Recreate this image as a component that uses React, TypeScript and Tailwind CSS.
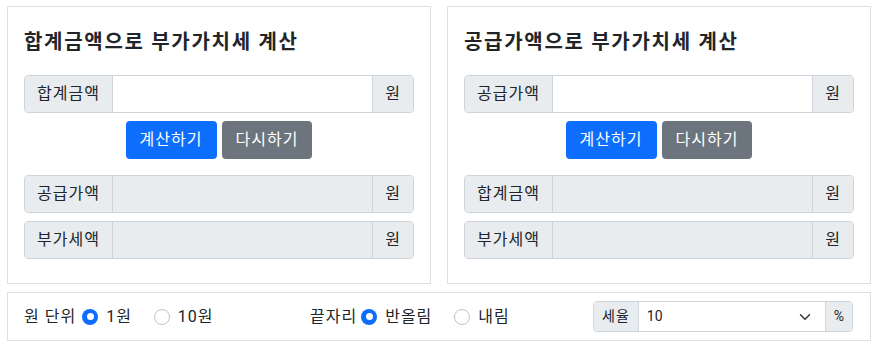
import { useState } from "react";

const FONT = { fontFamily: 'Roboto, "Noto Sans CJK KR", sans-serif' };

function Addon({ children, className = "" }: { children: React.ReactNode; className?: string }) {
  return (
    <span className={`flex items-center bg-[#e9ecef] px-3 text-[16px] tracking-[1px] text-[#212529] ${className}`}>
      {children}
    </span>
  );
}

function Field({ label, disabled }: { label: string; disabled?: boolean }) {
  return (
    <div className="flex h-[38px] overflow-hidden rounded-[4px] border border-[#ced4da]">
      <Addon className="border-r border-[#ced4da]">{label}</Addon>
      <input
        disabled={disabled}
        className={`min-w-0 flex-1 px-3 text-[16px] outline-none ${disabled ? "bg-[#e9ecef]" : "bg-white"}`}
      />
      <Addon className="border-l border-[#ced4da]">원</Addon>
    </div>
  );
}

function CalcCard({ title, input, outputs }: { title: string; input: string; outputs: string[] }) {
  return (
    <div className="border border-[#dfdfdf] bg-white px-4 pb-6 pt-4">
      <h2 className="mb-[14px] h-[38px] text-[20px] font-bold leading-[38px] tracking-[1.7px] text-[#212529]">{title}</h2>
      <Field label={input} />
      <div className="mt-2 flex justify-center gap-[5px]">
        <button className="h-[38px] rounded-[4px] bg-[#0d6efd] px-[14px] text-[16px] tracking-[1px] text-white">계산하기</button>
        <button className="h-[38px] rounded-[4px] bg-[#6c757d] px-[14px] text-[16px] tracking-[1px] text-white">다시하기</button>
      </div>
      <div className="mt-4 flex flex-col gap-2">
        {outputs.map((o) => (
          <Field key={o} label={o} disabled />
        ))}
      </div>
    </div>
  );
}

function Radio({ checked, label, onClick }: { checked: boolean; label: string; onClick: () => void }) {
  return (
    <label className="flex cursor-pointer items-center gap-2" onClick={onClick}>
      {checked ? (
        <span className="flex h-4 w-4 items-center justify-center rounded-full bg-[#0d6efd]">
          <span className="h-[7px] w-[7px] rounded-full bg-white" />
        </span>
      ) : (
        <span className="h-4 w-4 rounded-full border border-[#c4c4c4] bg-white" />
      )}
      <span>{label}</span>
    </label>
  );
}

export default function App() {
  const [unit, setUnit] = useState("1");
  const [round, setRound] = useState("round");

  return (
    <div className="bg-white pb-2 pl-[7px] pr-2 pt-[6px] text-[#212529]" style={FONT}>
      <div className="grid grid-cols-2 gap-4">
        <CalcCard title="합계금액으로 부가가치세 계산" input="합계금액" outputs={["공급가액", "부가세액"]} />
        <CalcCard title="공급가액으로 부가가치세 계산" input="공급가액" outputs={["합계금액", "부가세액"]} />
      </div>

      <div className="mt-2 flex h-[49px] items-center border border-[#dfdfdf] px-4 text-[16px] tracking-[1px]">
        <div className="flex w-[286px] items-center">
          <span className="mr-[6px]">원 단위</span>
          <Radio checked={unit === "1"} label="1원" onClick={() => setUnit("1")} />
          <span className="w-[22px]" />
          <Radio checked={unit === "10"} label="10원" onClick={() => setUnit("10")} />
        </div>
        <div className="flex w-[283px] items-center">
          <span className="mr-[4px]">끝자리</span>
          <Radio checked={round === "round"} label="반올림" onClick={() => setRound("round")} />
          <span className="w-[22px]" />
          <Radio checked={round === "floor"} label="내림" onClick={() => setRound("floor")} />
        </div>
        <div className="flex h-[31px] w-[260px] overflow-hidden rounded-[4px] border border-[#ced4da] text-[14px] tracking-normal">
          <span className="flex items-center border-r border-[#ced4da] bg-[#e9ecef] px-2 tracking-[1px]">세율</span>
          <div className="flex flex-1 items-center justify-between bg-white pl-2 pr-[14px]">
            <span>10</span>
            <svg width="12" height="12" viewBox="0 0 16 16" fill="none" stroke="#343a40" strokeWidth="2" strokeLinecap="round" strokeLinejoin="round">
              <path d="M2 5l6 6 6-6" />
            </svg>
          </div>
          <span className="flex items-center border-l border-[#ced4da] bg-[#e9ecef] px-2">%</span>
        </div>
      </div>
    </div>
  );
}
